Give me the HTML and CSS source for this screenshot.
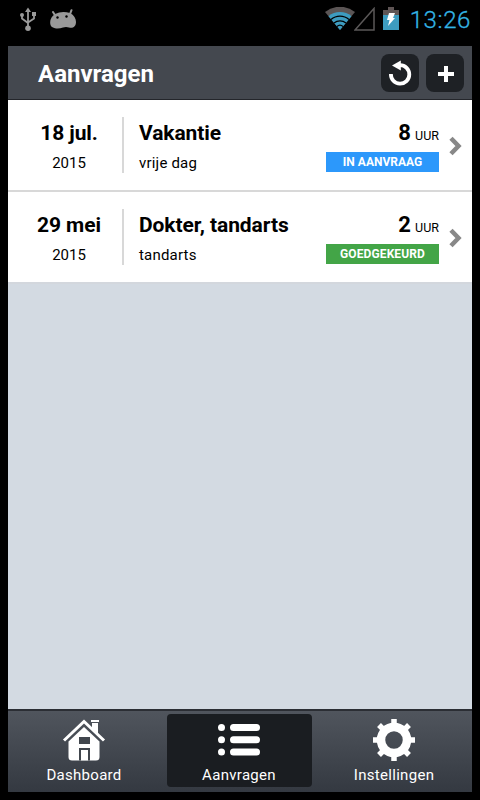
FILE: index.html
```html
<!DOCTYPE html>
<html lang="nl">
<head>
    <meta charset="UTF-8">
    <meta name="viewport" content="width=device-width, initial-scale=1.0">
    <title>Aanvragen</title>
    <link rel="stylesheet" href="styles.css">
</head>
<body>
    <div class="status-bar">
        <svg class="usb-icon" width="18" height="24" viewBox="0 0 18 24">
            <g fill="none" stroke="#999" stroke-width="1.8">
                <path d="M9 3v17M3 8v3.500l6 4.500M15 7v4.500l-6 4"/>
            </g>
            <g fill="#999">
                <path d="M9 0.500l3 4.500H6z"/>
                <circle cx="3" cy="8" r="2"/>
                <rect x="13" y="5" width="4" height="4"/>
                <circle cx="9" cy="21.200" r="2.800"/>
            </g>
        </svg>
        <svg class="droid-icon" width="28" height="20" viewBox="0 0 28 20">
            <path d="M4 3l2.500 4M22.500 1.200l-1.500 4" stroke="#999" stroke-width="2" stroke-linecap="round"/>
            <path fill="#999" d="M6 5Q13 1.500 21 4C25 6 27 9.500 27 13C27 17.500 24 19.500 20 18.500Q17 17.500 14 18.500Q10 20 6 19.300C2 18.300 1 16 1.200 13Q1.500 8 6 5z"/>
            <circle cx="8.500" cy="8.500" r="1.200"/>
            <circle cx="17.500" cy="7.500" r="1.200"/>
        </svg>
        <svg class="wifi-icon" width="30" height="24" viewBox="0 0 30 24">
            <path fill="#5b5555" d="M15 23L0 5A24 24 0 0 1 30 5z"/>
            <path fill="#3d9cc0" d="M15 23L3.500 9.200A18 18 0 0 1 26.500 9.200z"/>
            <path fill="none" stroke="#000" stroke-width="1.300" d="M6 12.600A13.500 13.500 0 0 1 24 12.600M9 16.100A9 9 0 0 1 21 16.100M12 19.500A4.500 4.500 0 0 1 18 19.500"/>
        </svg>
        <svg class="signal-icon" width="21" height="24" viewBox="0 0 21 24">
            <path fill="none" stroke="#5b5858" stroke-width="1.500" d="M20 1.500V23H1z"/>
        </svg>
        <svg class="battery-icon" width="16" height="24" viewBox="0 0 16 24">
            <path fill="#5f5555" d="M5 0h6v3h5v6H0V3h5z"/>
            <path fill="#3d9cc0" d="M0 8h16v15H0z"/>
            <path fill="#fff" d="M6 6h6l-2 5h2l-7 8 1.500-6H4z"/>
        </svg>
        <span class="clock">13:26</span>
    </div>

    <div class="app">
        <header class="header">
            <h1>Aanvragen</h1>
            <button class="header-btn" aria-label="Vernieuwen">
                <svg width="38" height="38" viewBox="0 0 38 38">
                    <path fill="none" stroke="#fff" stroke-width="3.800" d="M9.900 20A9.200 9.200 0 1 0 19 11.200h-2"/>
                    <path fill="#fff" d="M11 11.500L19.800 6.500v10z"/>
                </svg>
            </button>
            <button class="header-btn" aria-label="Toevoegen">
                <svg width="38" height="38" viewBox="0 0 38 38">
                    <path stroke="#fff" stroke-width="4" d="M12 20h16M20 12v16"/>
                </svg>
            </button>
        </header>

        <main class="requests">
            <div class="request">
                <div class="date">
                    <strong>18 jul.</strong>
                    <span>2015</span>
                </div>
                <div class="info">
                    <strong>Vakantie</strong>
                    <span>vrije dag</span>
                </div>
                <div class="state">
                    <div class="hours"><strong>8</strong> UUR</div>
                    <div class="badge pending">IN AANVRAAG</div>
                </div>
                <svg class="chevron" width="13" height="20" viewBox="0 0 13 20">
                    <path fill="none" stroke="#888" stroke-width="4.500" d="M2 2.200L9.500 10 2 17.800"/>
                </svg>
            </div>
            <div class="request">
                <div class="date">
                    <strong>29 mei</strong>
                    <span>2015</span>
                </div>
                <div class="info">
                    <strong>Dokter, tandarts</strong>
                    <span>tandarts</span>
                </div>
                <div class="state">
                    <div class="hours"><strong>2</strong> UUR</div>
                    <div class="badge approved">GOEDGEKEURD</div>
                </div>
                <svg class="chevron" width="13" height="20" viewBox="0 0 13 20">
                    <path fill="none" stroke="#888" stroke-width="4.500" d="M2 2.200L9.500 10 2 17.800"/>
                </svg>
            </div>
        </main>

        <nav class="tabs">
            <a class="tab">
                <svg width="44" height="44" viewBox="0 0 44 44">
                    <path fill="#fff" d="M29 2h8v2h-8zM30 5h6v12l-6-6z"/>
                    <path fill="none" stroke="#fff" stroke-width="3" d="M2 22.500L22 3.500l20 19"/>
                    <path fill="#fff" d="M22 9l15.500 14.500V39q0 3.500-3.500 3.500H10q-3.500 0-3.500-3.500V23.500z"/>
                    <path fill="#41464d" d="M17 19h11v7H17zM17 30h11v12.500H17z"/>
                    <path fill="#fff" d="M19 32h7v10.500h-7z"/>
                </svg>
                <span>Dashboard</span>
            </a>
            <a class="tab active">
                <svg width="44" height="44" viewBox="0 0 44 44">
                    <g stroke="#fff" stroke-width="7" stroke-linecap="round">
                        <path d="M4.500 9.500h0M4.500 21.800h0M4.500 34h0M16.500 9.500h23M16.500 21.800h23M16.500 34h23"/>
                    </g>
                </svg>
                <span>Aanvragen</span>
            </a>
            <a class="tab">
                <svg width="44" height="44" viewBox="0 0 44 44">
                    <circle cx="22" cy="22" r="13" fill="none" stroke="#fff" stroke-width="8.500"/>
                    <path stroke="#fff" stroke-width="5.500" d="M22 1v7M22 36v7M1 22h7M36 22h7M7 7l5 5M32 32l5 5M37 7l-5 5M12 32l-5 5"/>
                </svg>
                <span>Instellingen</span>
            </a>
        </nav>
    </div>
</body>
</html>
```

FILE: styles.css
```css
* {
    margin: 0;
    padding: 0;
    box-sizing: border-box;
    font-family: Roboto, sans-serif;
}

body {
    height: 100vh;
    display: flex;
    flex-direction: column;
    background: #000;
    overflow: hidden;
}

/* status bar */
.status-bar {
    height: 46px;
    padding: 7px 9px 0 19px;
    display: flex;
    align-items: flex-start;
}

.droid-icon {
    margin: 2px 0 0 12px;
}

.wifi-icon {
    margin-left: auto;
}

.signal-icon {
    margin-left: -1px;
}

.battery-icon {
    margin-left: 8px;
}

.clock {
    width: 62px;
    margin-left: 10px;
    color: #33b5e5;
    font-size: 24px;
    line-height: 26px;
    font-weight: 300;
    letter-spacing: 0.6px;
    text-align: right;
    white-space: nowrap;
    -webkit-text-stroke: 0.3px #33b5e5;
}

.app {
    flex: 1;
    margin: 0 8px 8px;
    display: flex;
    flex-direction: column;
    background: #d3dae2;
}

/* header */
.header {
    height: 54px;
    padding: 0 8px 0 30px;
    display: flex;
    align-items: center;
    gap: 7px;
    background: #44484f;
    border-bottom: 1px solid #24262b;
}

.header h1 {
    flex: 1;
    padding-top: 2px;
    color: #fff;
    font-size: 24px;
    font-weight: 700;
    line-height: 28px;
}

.header-btn {
    width: 38px;
    height: 38px;
    border: none;
    border-radius: 8px;
    background: #1e2125;
}

.header-btn svg {
    display: block;
}

/* request list */
.requests {
    flex: 1;
}

.request {
    height: 92px;
    padding: 17px 10px 0 0;
    display: flex;
    background: #fff;
    border-bottom: 2px solid #d8d8d8;
}

.request:last-child {
    border-bottom-color: #d3d7dd;
}

.date {
    width: 116px;
    height: 56px;
    padding-left: 8px;
    border-right: 2px solid #d8d8d8;
    text-align: center;
}

.info {
    flex: 1;
    padding-left: 15px;
}

.date strong,
.info strong {
    display: block;
    font-size: 21px;
    line-height: 32px;
    letter-spacing: -0.08px;
    white-space: nowrap;
}

.date span,
.info span {
    display: block;
    font-size: 15px;
    line-height: 28px;
}

.info span {
    letter-spacing: 0.2px;
}

.state {
    width: 113px;
}

.hours {
    height: 35px;
    font-size: 12.5px;
    line-height: 32px;
    text-align: right;
}

.hours strong {
    margin-right: 1px;
    font-size: 22px;
}

.badge {
    height: 20px;
    color: #fff;
    font-size: 12px;
    font-weight: 700;
    line-height: 20px;
    text-align: center;
}

.pending {
    background: #2c98fb;
}

.approved {
    background: #43a547;
    letter-spacing: 0.1px;
}

.chevron {
    margin: 19px 0 0 10px;
}

/* bottom tabs */
.tabs {
    height: 83px;
    padding: 3px 6px 5px 4px;
    display: grid;
    grid-template-columns: 144px 145px 144px;
    justify-content: space-between;
    background: linear-gradient(#50555d, #343941);
    border-top: 2px solid #2b2e34;
}

.tab {
    padding-top: 4px;
    display: flex;
    flex-direction: column;
    align-items: center;
    color: #fff;
    font-size: 15px;
    line-height: 18px;
    border-radius: 4px;
}

.tab span {
    margin-top: 4px;
    letter-spacing: 0.3px;
}

.active {
    background: #1a1d21;
}
```
